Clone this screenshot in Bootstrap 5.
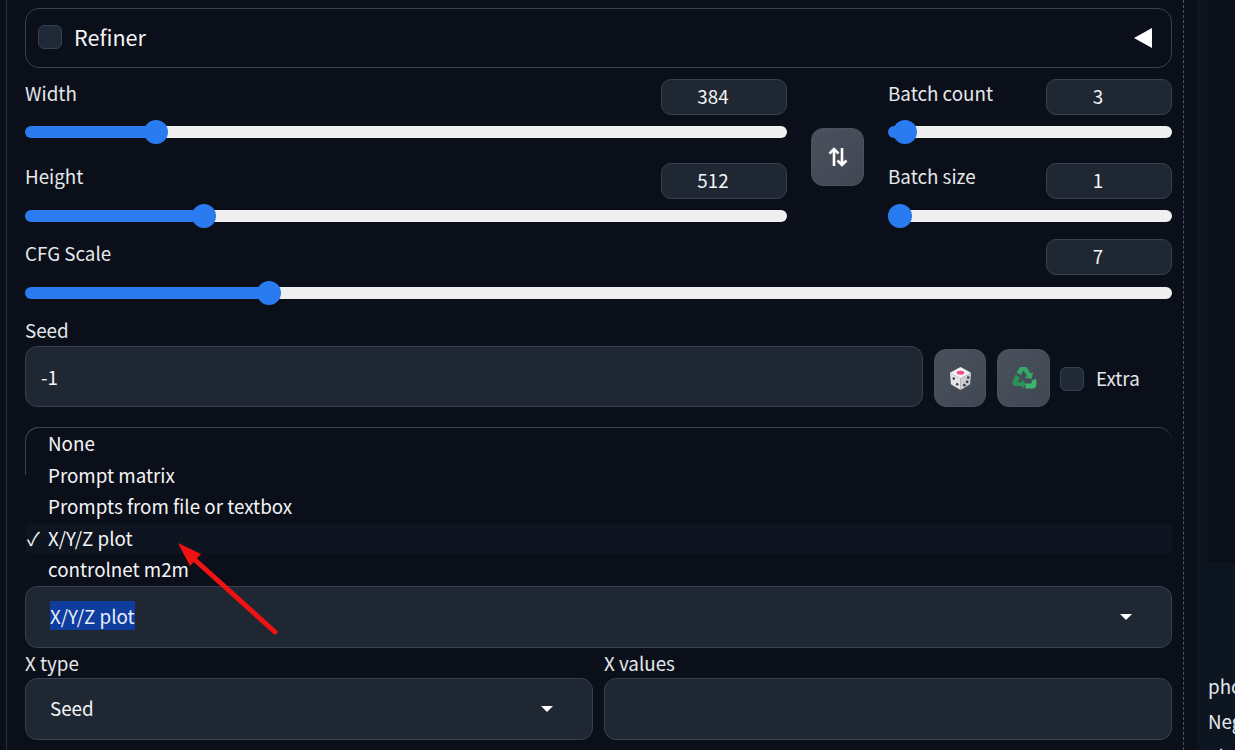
<!DOCTYPE html>
<html lang="en">
<head>
  <meta charset="UTF-8" />
  <meta name="viewport" content="width=device-width, initial-scale=1.0" />
  <title>txt2img settings</title>
  <link href="https://cdn.jsdelivr.net/npm/bootstrap@5.3.3/dist/css/bootstrap.min.css" rel="stylesheet">
  <style>
    html, body { height: 750px; overflow: hidden; }
    body { background: #0b0f19; color: #e5e7eb; font-family: "Noto Sans CJK SC", "Noto Sans", sans-serif; font-size: 18.8px; }
    .page-wrap { width: 1235px; height: 750px; position: relative; overflow: hidden; }
    .left-pane { width: 1178px; height: 750px; margin-left: 6px; padding: 8px 11px 0 18px; border-left: 1px solid #2a303c; border-right: 1px dashed #4b5563; flex: none; }
    .right-pane { width: 51px; background: #0b0f19; flex: none; }
    .right-inner { margin-left: 13px; height: 750px; background: #0d1520; padding-left: 11px; position: relative; overflow: hidden; }
    .gallery { height: 563px; margin-right: -20px; background: #0b0f19; }
    .gen-text { margin-top: 105px; line-height: 35px; white-space: nowrap; color: #e5e7eb; }
    .refiner-box { height: 60px; border: 1px solid #374151; border-radius: 14px; padding: 0 18px 1px 12px; margin-bottom: 11px; }
    .refiner-box span { font-size: 21.6px; color: #f3f4f6; }
    .dark-check.form-check-input { width: 24px; height: 24px; margin: 0; background-color: #1f2937; border: 1px solid #374151; border-radius: 6px; flex: none; }
    .field-label { line-height: 28px; color: #e5e7eb; }
    .num-box { width: 126px; height: 36px; padding: 1px 22px 0 0; text-align: center; color: #f3f4f6; line-height: 30px; background: #1f2733; border: 1px solid #374151; border-radius: 10px; }
    .slider-row { height: 65px; }
    .slider-gap { margin-top: 19px; }
    .slider-gap .field-label { margin-top: -1px; }
    .cfg-gap { margin-top: 11px; }
    .seed-label { margin-top: 12px; line-height: 28px; padding-bottom: 2px; }
    .slider-row .form-range { display: block; height: 24px; padding: 0; }
    .slider-row > .d-flex + .form-range { margin-top: 5px; }
    .slider-row.cfg-gap > .d-flex + .form-range { margin-top: 6px; }
    .form-range.fill-range::-webkit-slider-runnable-track { height: 12px; border-radius: 6px; background: linear-gradient(to right, #2b7bf0 calc(12px + (100% - 24px) * var(--v)), #efefef 0); }
    .form-range.fill-range::-webkit-slider-thumb { width: 24px; height: 24px; margin-top: -6px; border-radius: 50%; background: #2b7bf0; border: 0; }
    .gray-btn { width: 53px; height: 58px; padding: 0; display: flex; align-items: center; justify-content: center; background: linear-gradient(135deg, #4a515d, #3f4753); border: 1px solid #4b5260; border-radius: 12px; flex: none; }
    .dice-btn { width: 52px; }
    .gap-btn { margin-left: 11px; }
    .dim-col { width: 762px; }
    .swap-col { width: 101px; flex: none; display: flex; justify-content: center; padding-top: 49px; }
    .batch-col { width: 284px; }
    .dark-field { background: #1f2733; border: 1px solid #374151; border-radius: 12px; color: #f3f4f6; height: 62px; font-size: 18.8px; padding: 0 24px; }
    .seed-input { width: 898px; height: 61px; padding-left: 15px; flex: none; }
    .extra-wrap { margin-left: 10px; }
    .script-box { margin-top: 20px; height: 159px; position: relative; border-top: 1px solid #374151; border-radius: 14px 14px 0 0; }
    .script-box::before { content: ""; position: absolute; left: 0; top: 0; width: 14px; height: 48px; border-left: 1px solid #374151; border-top: 1px solid #374151; border-top-left-radius: 14px; margin-top: -1px; }
    .script-list { list-style: none; margin: -0.6px 0 0; padding: 0 0 0 1px; position: relative; }
    .script-list li { height: 31.5px; line-height: 31px; padding-left: 22px; color: #f3f4f6; white-space: nowrap; position: relative; }
    .script-list li.picked { background: linear-gradient(transparent 2px, #0f1520 2px); }
    .tick { position: absolute; left: 1px; top: 0; }
    .picked-text { background: #0f3d9e; color: #e8eefc; display: inline-block; line-height: 29px; margin-bottom: 3px; }
    .seed-value { margin-bottom: 2px; }
    .caret-down { width: 0; height: 0; border-left: 6px solid transparent; border-right: 6px solid transparent; border-top: 6px solid #fff; }
    .caret-field { padding-right: 39px; }
    .half-col { width: 568px; flex: none; }
    .half-col .field-label { line-height: 24px; margin-top: 3px; padding-bottom: 3px; }
    .red-arrow { position: absolute; left: 170px; top: 535px; }
  </style>
</head>
<body>
  <div class="page-wrap d-flex">
    <div class="left-pane">

      <div class="refiner-box d-flex align-items-center justify-content-between">
        <div class="d-flex align-items-center gap-2">
          <input class="form-check-input dark-check" type="checkbox">
          <span class="ms-1">Refiner</span>
        </div>
        <svg width="19" height="20" viewBox="0 0 19 20"><path d="M0 10 18 0V20z" fill="#fff"/></svg>
      </div>

      <div class="d-flex">
        <div class="dim-col">
          <div class="slider-row">
            <div class="d-flex justify-content-between"><div class="field-label">Width</div><div class="num-box">384</div></div>
            <input type="range" class="form-range fill-range" min="64" max="2048" value="384" style="--v:0.1613">
          </div>
          <div class="slider-row slider-gap">
            <div class="d-flex justify-content-between"><div class="field-label">Height</div><div class="num-box">512</div></div>
            <input type="range" class="form-range fill-range" min="64" max="2048" value="512" style="--v:0.2258">
          </div>
        </div>
        <div class="swap-col">
          <button class="gray-btn" type="button" aria-label="Swap">
            <svg width="20" height="22" viewBox="0 0 20 22" fill="none" stroke="#fff" stroke-width="2.6"><path d="M6 20V3M1.500 7.500 6 3l4.500 4.500M14 2v17M9.500 14.500 14 19l4.500-4.500"/></svg>
          </button>
        </div>
        <div class="batch-col">
          <div class="slider-row">
            <div class="d-flex justify-content-between"><div class="field-label">Batch count</div><div class="num-box">3</div></div>
            <input type="range" class="form-range fill-range" min="1" max="100" value="3" style="--v:0.0202">
          </div>
          <div class="slider-row slider-gap">
            <div class="d-flex justify-content-between"><div class="field-label">Batch size</div><div class="num-box">1</div></div>
            <input type="range" class="form-range fill-range" min="1" max="8" value="1" style="--v:0">
          </div>
        </div>
      </div>

      <div class="slider-row cfg-gap">
        <div class="d-flex justify-content-between"><div class="field-label">CFG Scale</div><div class="num-box">7</div></div>
        <input type="range" class="form-range fill-range" min="1" max="30" value="7" style="--v:0.2069">
      </div>

      <div class="field-label seed-label">Seed</div>
      <div class="d-flex align-items-end">
        <input class="form-control dark-field seed-input" type="text" value="-1">
        <button class="gray-btn dice-btn gap-btn" type="button" aria-label="Random seed">
          <svg width="23" height="25" viewBox="0 0 24 26">
            <path d="M12 1 23 7 12 13 1 7z" fill="#f4f1f2"/>
            <path d="M1 7 12 13V25L2 19z" fill="#e4e2e4"/>
            <path d="M23 7 12 13V25L22 19z" fill="#cfcdd1"/>
            <ellipse cx="12" cy="7" rx="4" ry="2" fill="#ec4f8c"/>
            <circle cx="5" cy="13" r="1.300" fill="#3a3a44"/><circle cx="8.500" cy="19" r="1.300" fill="#3a3a44"/>
            <circle cx="16" cy="20" r="1.400" fill="#3a3a44"/><circle cx="19" cy="16.500" r="1.400" fill="#3a3a44"/><circle cx="20" cy="12" r="1.300" fill="#3a3a44"/>
          </svg>
        </button>
        <button class="gray-btn gap-btn" type="button" aria-label="Reuse seed">
          <svg width="26" height="24" viewBox="0 0 26 24">
            <path d="M9 1H15.500L19.500 7.500 22 6 20.500 13 13.500 11.500 16 10 12.500 4.500 10 9 5.500 6.500z" fill="#37a866"/>
            <path d="M4.500 8.500 9 11.500 6.500 16H11V13L15 18 11 23V20H4.500C2 20 .5 17.500 1.800 15z" fill="#2b9156"/>
            <path d="M20.500 15 25 12.500 25.500 17.500C25.500 20.500 24 22.500 21.500 22.500H14.500V17.500H20.500z" fill="#3db56f"/>
          </svg>
        </button>
        <div class="d-flex align-items-center align-self-center gap-2 mt-1 extra-wrap">
          <input class="form-check-input dark-check" type="checkbox">
          <span class="ms-1">Extra</span>
        </div>
      </div>

      <div class="script-box">
        <ul class="script-list">
          <li>None</li>
          <li>Prompt matrix</li>
          <li>Prompts from file or textbox</li>
          <li class="picked"><span class="tick">✓</span>X/Y/Z plot</li>
          <li>controlnet m2m</li>
        </ul>
      </div>

      <div class="dark-field caret-field d-flex align-items-center justify-content-between">
        <span class="picked-text">X/Y/Z plot</span><span class="caret-down"></span>
      </div>

      <div class="d-flex justify-content-between">
        <div class="half-col">
          <div class="field-label">X type</div>
          <div class="dark-field caret-field d-flex align-items-center justify-content-between">
            <span class="seed-value">Seed</span><span class="caret-down"></span>
          </div>
        </div>
        <div class="half-col">
          <div class="field-label">X values</div>
          <div class="dark-field"></div>
        </div>
      </div>
    </div>

    <div class="right-pane">
      <div class="right-inner">
        <div class="gallery"></div>
        <div class="gen-text">pho<br>Neg<br>al</div>
      </div>
    </div>

    <svg class="red-arrow" width="112" height="104" viewBox="0 0 112 104">
      <path d="M8 8 31 19 20 31z" fill="#ee1212"/>
      <path d="M24 24 105 97" stroke="#ee1212" stroke-width="5" stroke-linecap="round"/>
    </svg>
  </div>
  <script src="https://cdn.jsdelivr.net/npm/bootstrap@5.3.3/dist/js/bootstrap.bundle.min.js"></script>
</body>
</html>
